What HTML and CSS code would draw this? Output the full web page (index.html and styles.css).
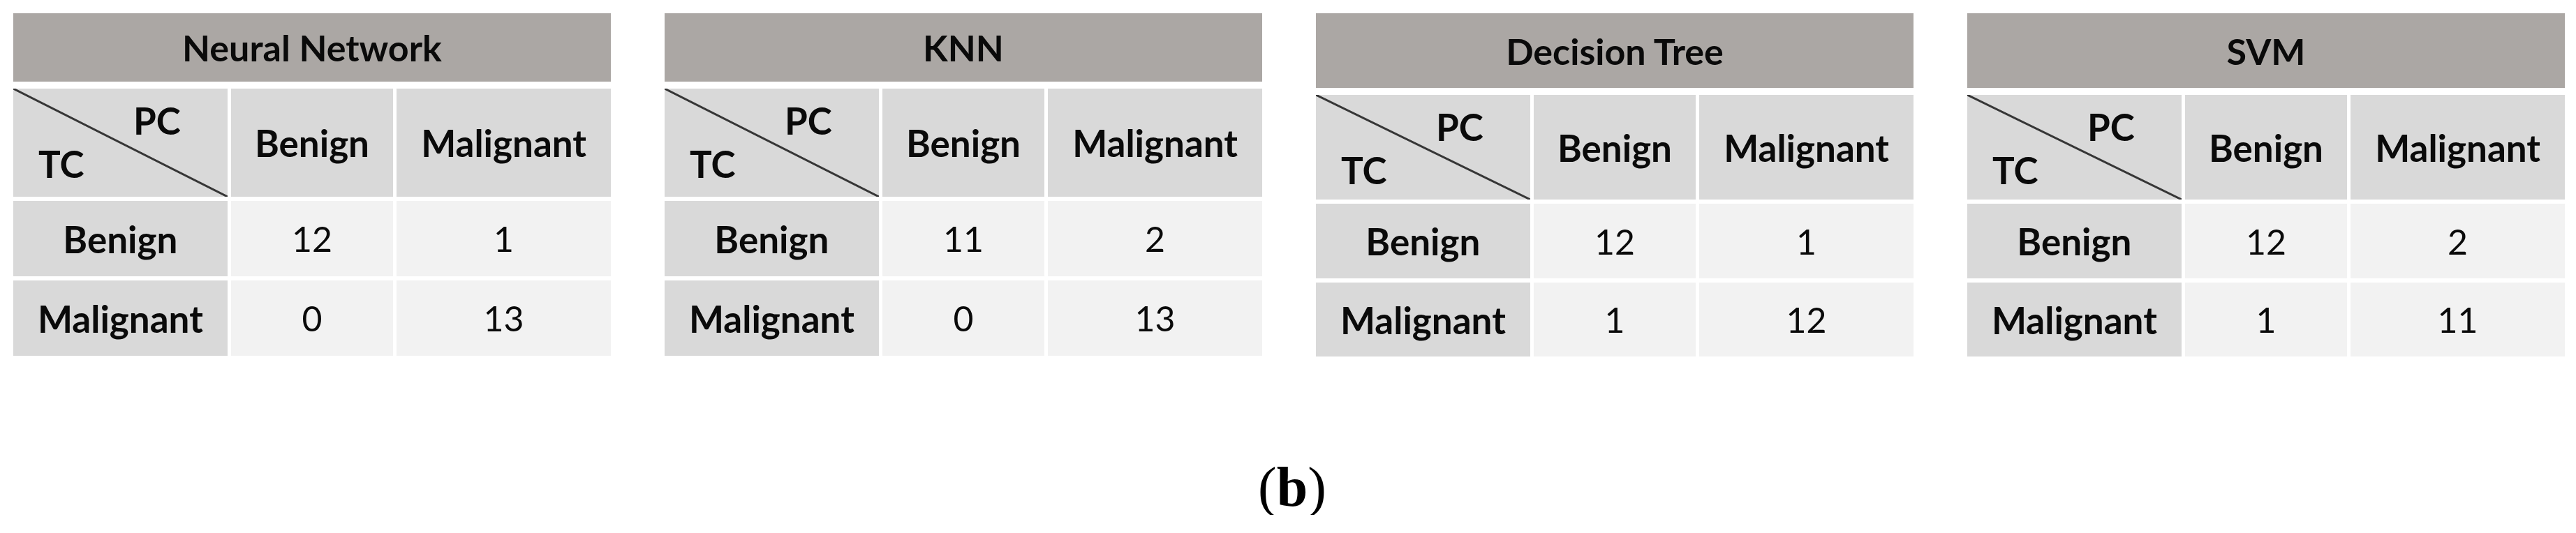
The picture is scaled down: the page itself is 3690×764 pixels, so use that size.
FILE: index.html
```html
<!DOCTYPE html>
<html lang="en">
<head>
    <meta charset="UTF-8">
    <title>Confusion Matrices</title>
    <link rel="stylesheet" href="styles.css">
</head>
<body>
    <div class="figure">
        <div class="matrices">
            <section class="matrix">
                <div class="matrix-title">Neural Network</div>
                <div class="matrix-grid">
                    <div class="cell cell-corner"><span class="pc">PC</span><span class="tc">TC</span></div>
                    <div class="cell cell-head">Benign</div>
                    <div class="cell cell-head">Malignant</div>
                    <div class="cell cell-label">Benign</div>
                    <div class="cell cell-value">12</div>
                    <div class="cell cell-value">1</div>
                    <div class="cell cell-label">Malignant</div>
                    <div class="cell cell-value">0</div>
                    <div class="cell cell-value">13</div>
                </div>
            </section>

            <section class="matrix">
                <div class="matrix-title">KNN</div>
                <div class="matrix-grid">
                    <div class="cell cell-corner"><span class="pc">PC</span><span class="tc">TC</span></div>
                    <div class="cell cell-head">Benign</div>
                    <div class="cell cell-head">Malignant</div>
                    <div class="cell cell-label">Benign</div>
                    <div class="cell cell-value">11</div>
                    <div class="cell cell-value">2</div>
                    <div class="cell cell-label">Malignant</div>
                    <div class="cell cell-value">0</div>
                    <div class="cell cell-value">13</div>
                </div>
            </section>

            <section class="matrix matrix-tall">
                <div class="matrix-title">Decision Tree</div>
                <div class="matrix-grid">
                    <div class="cell cell-corner"><span class="pc">PC</span><span class="tc">TC</span></div>
                    <div class="cell cell-head">Benign</div>
                    <div class="cell cell-head">Malignant</div>
                    <div class="cell cell-label">Benign</div>
                    <div class="cell cell-value">12</div>
                    <div class="cell cell-value">1</div>
                    <div class="cell cell-label">Malignant</div>
                    <div class="cell cell-value">1</div>
                    <div class="cell cell-value">12</div>
                </div>
            </section>

            <section class="matrix matrix-tall">
                <div class="matrix-title">SVM</div>
                <div class="matrix-grid">
                    <div class="cell cell-corner"><span class="pc">PC</span><span class="tc">TC</span></div>
                    <div class="cell cell-head">Benign</div>
                    <div class="cell cell-head">Malignant</div>
                    <div class="cell cell-label">Benign</div>
                    <div class="cell cell-value">12</div>
                    <div class="cell cell-value">2</div>
                    <div class="cell cell-label">Malignant</div>
                    <div class="cell cell-value">1</div>
                    <div class="cell cell-value">11</div>
                </div>
            </section>
        </div>

        <div class="caption">(<b>b</b>)</div>
    </div>
</body>
</html>
```

FILE: styles.css
```css
:root {
    --title-bg: #aba7a4;
    --head-bg: #d9d9d9;
    --value-bg: #f2f2f2;
    --text-color: #0a0a0a;
    --line-color: #363636;
}

* {
    margin: 0;
    padding: 0;
    box-sizing: border-box;
}

body {
    background-color: #ffffff;
    color: var(--text-color);
    font-family: Lato, "Open Sans", sans-serif;
}

.figure {
    width: 3690px;
    padding-top: 19px;
}

.matrices {
    display: flex;
    gap: 77px;
    padding-left: 19px;
}

.matrix {
    width: 856px;
    display: flex;
    flex-direction: column;
    gap: 10px;
}

.matrix-title {
    height: 98px;
    background-color: var(--title-bg);
    display: flex;
    align-items: center;
    justify-content: center;
    font-size: 52px;
    font-weight: 700;
    line-height: 1;
}

.matrix-grid {
    display: grid;
    grid-template-columns: 1.32fr 1fr 1.32fr;
    grid-template-rows: 155px 108px 108px;
    column-gap: 5px;
    row-gap: 6px;
}

.matrix-tall .matrix-title {
    height: 107px;
}

.matrix-tall .matrix-grid {
    grid-template-rows: 150px 107px 106px;
}

.cell {
    display: flex;
    align-items: center;
    justify-content: center;
    font-size: 53px;
    line-height: 1;
}

.cell-head,
.cell-label {
    background-color: var(--head-bg);
    font-weight: 700;
}

.cell-value {
    background-color: var(--value-bg);
    font-size: 50px;
}

.cell-corner {
    flex-direction: column;
    align-items: flex-start;
    justify-content: flex-start;
    padding: 19px 0 0 36px;
    font-weight: 700;
    background-color: var(--head-bg);
    background-image: linear-gradient(to top right,
        transparent calc(50% - 2px),
        var(--line-color) calc(50% - 1px),
        var(--line-color) calc(50% + 1px),
        transparent calc(50% + 2px));
}

.cell-corner .pc {
    margin-left: 136px;
}

.cell-corner .tc {
    margin-top: 9px;
}

.caption {
    margin-top: 147px;
    padding-left: 12px;
    text-align: center;
    font-family: "Liberation Serif", "Times New Roman", serif;
    font-size: 80px;
    line-height: 1;
    color: #000000;
}

.caption b {
    font-weight: 700;
}
```
